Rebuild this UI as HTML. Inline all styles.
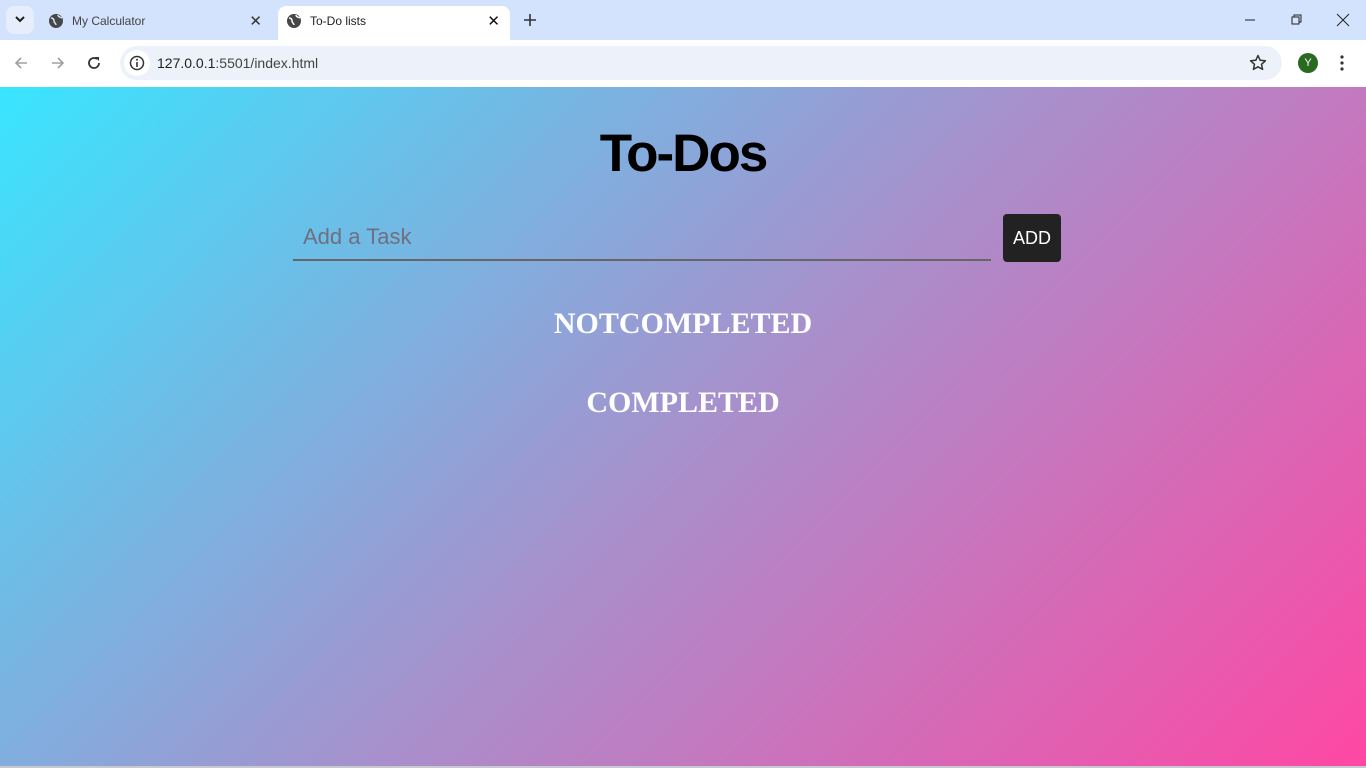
<!DOCTYPE html>
<html><head><meta charset="utf-8"><style>
*{margin:0;padding:0;box-sizing:border-box}
body{width:1366px;height:768px;overflow:hidden;font-family:"Liberation Sans",sans-serif;background:#fff;position:relative}
.tabbar{position:absolute;left:0;top:0;width:1366px;height:40px;background:#d3e3fd}
.tab{position:absolute;top:6px;height:34px;font-size:12px;color:#1f1f1f;display:flex;align-items:center;padding-bottom:4px}
.toolbar{position:absolute;left:0;top:40px;width:1366px;height:46px;background:#fff}
.omni{position:absolute;left:120px;top:6px;width:1162px;height:34px;border-radius:17px;background:#edf2fa}
.content{position:absolute;left:0;top:87px;width:1366px;height:679px;background:linear-gradient(135deg,#39e5ff 0%,#a592cd 50%,#ff47a3 100%)}
.bottom{position:absolute;left:0;top:766px;width:1366px;height:2px;background:#c8c8d0}
.abs{position:absolute}
</style></head><body>
<div class="tabbar">
 <div class="abs" style="left:6px;top:6px;width:28px;height:28px;border-radius:8px;background:#e6eefc"></div>
 <svg class="abs" style="left:13px;top:14px" width="14" height="12"><path d="M3 3l4 4 4-4" stroke="#1f1f1f" stroke-width="2" fill="none"/></svg>
 <div class="tab" style="left:40px;width:234px">
  <svg style="margin-left:8px" width="16" height="16"><circle cx="8" cy="8" r="7" fill="#474747"/><path d="M3 5c2 0 3 1 3 3s2 2 2 4M10 2c0 2 2 2 4 3" stroke="#d3e3fd" stroke-width="1.5" fill="none"/></svg>
  <span style="margin-left:8px;color:#444">My Calculator</span>
  <span style="position:absolute;right:12px;font-size:15px;color:#333">✕</span>
 </div>
 <div class="tab" style="left:278px;width:232px;background:#fff;border-radius:8px 8px 0 0">
  <svg style="margin-left:8px" width="16" height="16"><circle cx="8" cy="8" r="7" fill="#474747"/><path d="M3 5c2 0 3 1 3 3s2 2 2 4M10 2c0 2 2 2 4 3" stroke="#fff" stroke-width="1.5" fill="none"/></svg>
  <span style="margin-left:8px">To-Do lists</span>
  <span style="position:absolute;right:10px;font-size:15px;color:#111">✕</span>
 </div>
 <svg class="abs" style="left:523px;top:13px" width="14" height="14"><path d="M7 1v12M1 7h12" stroke="#333" stroke-width="1.6"/></svg>
 <svg class="abs" style="left:1244px;top:14px" width="12" height="12"><path d="M1 6h10" stroke="#222"/></svg>
 <svg class="abs" style="left:1290px;top:13px" width="14" height="14"><rect x="2" y="4" width="7" height="7" fill="none" stroke="#222"/><path d="M4 4V2h7v7H9" fill="none" stroke="#222"/></svg>
 <svg class="abs" style="left:1336px;top:13px" width="14" height="14"><path d="M1 1l12 12M13 1L1 13" stroke="#222"/></svg>
</div>
<div class="toolbar">
 <svg class="abs" style="left:13px;top:15px" width="16" height="16"><path d="M14 8H3M8 3L3 8l5 5" stroke="#a0a0a0" stroke-width="1.6" fill="none"/></svg>
 <svg class="abs" style="left:50px;top:15px" width="16" height="16"><path d="M2 8h11M8 3l5 5-5 5" stroke="#a0a0a0" stroke-width="1.6" fill="none"/></svg>
 <svg class="abs" style="left:86px;top:15px" width="16" height="16"><path d="M13 8a5 5 0 1 1-2-4" stroke="#333" stroke-width="1.8" fill="none"/><path d="M9 2h4v4z" fill="#333"/></svg>
 <div class="omni">
  <div class="abs" style="left:4px;top:4px;width:26px;height:26px;border-radius:13px;background:#fff"></div>
  <svg class="abs" style="left:9px;top:9px" width="16" height="16"><circle cx="8" cy="8" r="6.5" stroke="#333" stroke-width="1.5" fill="none"/><path d="M8 7v5" stroke="#333" stroke-width="1.6"/><circle cx="8" cy="4.8" r="1" fill="#333"/></svg>
  <div class="abs" style="left:37px;top:9px;font-size:14px;color:#1f1f1f">127.0.0.1<span style="color:#444">:5501/index.html</span></div>
  <svg class="abs" style="left:1129px;top:8px" width="18" height="18"><path d="M9 1.5l2.2 4.8 5.2.5-3.9 3.5 1.1 5.1L9 12.8l-4.6 2.6 1.1-5.1L1.6 6.8l5.2-.5z" fill="none" stroke="#333" stroke-width="1.5" stroke-linejoin="round"/></svg>
 </div>
 <div class="abs" style="left:1298px;top:13px;width:20px;height:20px;border-radius:10px;background:#2a6a1f;color:#fff;font-size:11px;text-align:center;line-height:20px">Y</div>
 <svg class="abs" style="left:1336px;top:14px" width="12" height="18"><circle cx="6" cy="3" r="1.6" fill="#333"/><circle cx="6" cy="9" r="1.6" fill="#333"/><circle cx="6" cy="15" r="1.6" fill="#333"/></svg>
</div>
<div class="content">
 <div class="abs" style="left:0;width:1366px;top:37px;text-align:center;font-size:53px;font-weight:bold;color:#000;line-height:60px;letter-spacing:-2px">To-Dos</div>
 <div class="abs" style="left:303px;top:137px;font-size:22px;color:#6f6f7f">Add a Task</div>
 <div class="abs" style="left:293px;top:172px;width:698px;height:2px;background:#666"></div>
 <div class="abs" style="left:1003px;top:127px;width:58px;height:48px;background:#222;border-radius:4px;color:#fff;font-size:18px;text-align:center;line-height:48px">ADD</div>
 <div class="abs" style="left:0;width:1366px;top:219px;text-align:center;font-family:'Liberation Serif',serif;font-weight:bold;font-size:30px;color:#fff;line-height:36px">NOTCOMPLETED</div>
 <div class="abs" style="left:0;width:1366px;top:298px;text-align:center;font-family:'Liberation Serif',serif;font-weight:bold;font-size:30px;color:#fff;line-height:36px">COMPLETED</div>
</div>
<div class="bottom"></div>
</body></html>
